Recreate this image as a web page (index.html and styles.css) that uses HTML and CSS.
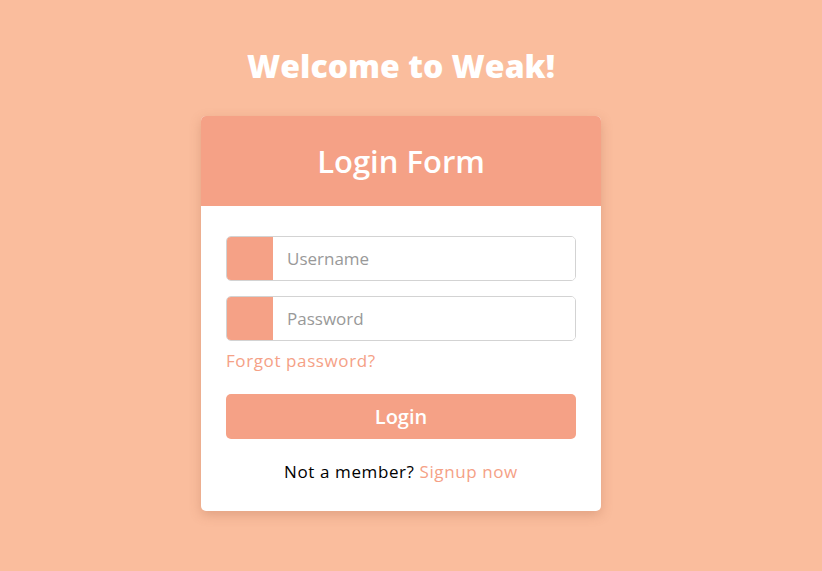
FILE: index.html
```html
<!DOCTYPE html>
<html>
<head>
<meta charset="utf-8">
<link rel="stylesheet" href="styles.css">
</head>
<body>
<div class="page">
  <h1 class="welcome">Welcome to Weak!</h1>
  <div class="card">
    <div class="card-head">Login Form</div>
    <form class="card-body">
      <div class="field">
        <span class="field-icon"></span>
        <input class="field-input" type="text" placeholder="Username">
      </div>
      <div class="field">
        <span class="field-icon"></span>
        <input class="field-input" type="password" placeholder="Password">
      </div>
      <a class="forgot" href="#">Forgot password?</a>
      <button class="login-btn" type="button">Login</button>
      <div class="signup">Not a member? <a href="#">Signup now</a></div>
    </form>
  </div>
</div>
</body>
</html>
```

FILE: styles.css
```css
* { box-sizing: border-box; }
html, body { margin: 0; padding: 0; }
body {
  background: #fabd9d;
  font-family: "Open Sans", "Noto Sans", sans-serif;
  width: 822px;
  height: 571px;
  overflow: hidden;
}
.page {
  width: 802px;
  display: flex;
  flex-direction: column;
  align-items: center;
  padding-top: 43px;
}
.welcome {
  margin: 0;
  color: #fff;
  font-size: 32px;
  font-weight: 800;
  line-height: 46px;
}
.card {
  margin-top: 27px;
  width: 400px;
  background: #fff;
  border-radius: 5px;
  overflow: hidden;
  box-shadow: 0 4px 12px rgba(150, 80, 50, 0.25);
}
.card-head {
  height: 90px;
  background: #f5a186;
  color: #fff;
  font-size: 31px;
  font-weight: 600;
  display: flex;
  align-items: center;
  justify-content: center;
}
.card-body {
  margin: 0;
  padding: 30px 25px 27px;
  display: flex;
  flex-direction: column;
}
.field {
  display: flex;
  height: 45px;
  border: 1px solid #d3d3d3;
  border-radius: 5px;
  overflow: hidden;
  margin-bottom: 15px;
}
.field:nth-of-type(2) { margin-bottom: 8px; }
.field-icon {
  width: 47px;
  background: #f5a186;
  margin: -1px 0 -1px -1px;
}
.field-input {
  flex: 1;
  border: none;
  outline: none;
  padding: 0 14px;
  font-family: inherit;
  font-size: 17px;
  color: #333;
}
.field-input::placeholder { color: #999; }
.forgot {
  color: #f5a186;
  text-decoration: none;
  font-size: 17px;
  letter-spacing: 0.6px;
  line-height: 24px;
}
.login-btn {
  margin-top: 21px;
  height: 45px;
  border: none;
  border-radius: 5px;
  background: #f5a186;
  color: #fff;
  font-family: inherit;
  font-size: 20px;
  font-weight: 600;
}
.signup {
  margin-top: 21px;
  text-align: center;
  font-size: 17px;
  letter-spacing: 0.6px;
  line-height: 24px;
  color: #000;
}
.signup a {
  color: #f5a186;
  text-decoration: none;
}
```
